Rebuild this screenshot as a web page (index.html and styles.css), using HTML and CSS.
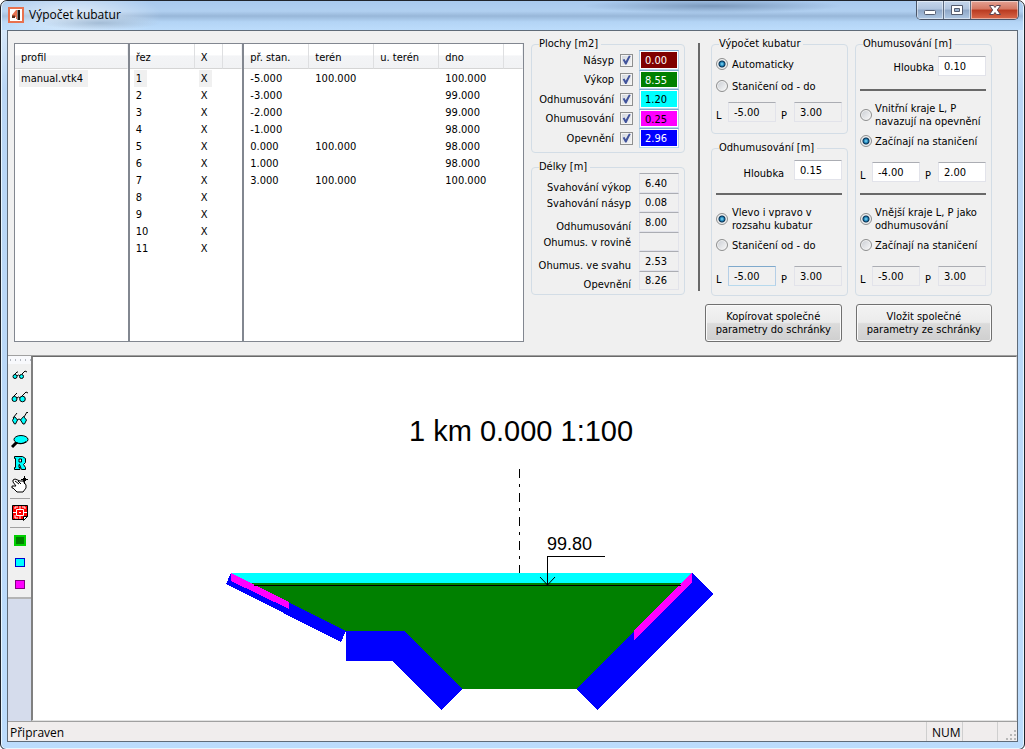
FILE: index.html
```html
<!DOCTYPE html>
<html lang="cs">
<head>
<meta charset="utf-8">
<title>Výpočet kubatur</title>
<link rel="stylesheet" href="styles.css">
</head>
<body>
<div class="window">
  <header class="titlebar">
    <svg class="app-icon" width="16" height="16" viewBox="0 0 16 16" aria-hidden="true">
      <rect x="1" y="1" width="14" height="14" fill="#fff" stroke="#e8714f" stroke-width="2"/>
      <path d="M8 3h1v9H8v-2H4V8z" fill="#e8714f"/><path d="M9.500 3H12v10H9.500z" fill="#1c1410"/><path d="M4 8.500h3V11H4z" fill="#5a2c1c"/>
    </svg>
    <h1 class="title">Výpočet kubatur</h1>
    <div class="caption">
      <button class="cap" type="button" aria-label="Minimalizovat"><svg width="14" height="12" viewBox="0 0 14 12"><rect x="1.500" y="6.500" width="11" height="4" rx="1" fill="#fff" stroke="#555d70"/></svg></button>
      <button class="cap" type="button" aria-label="Maximalizovat"><svg width="14" height="12" viewBox="0 0 14 12"><path d="M1.500 1.500h11v9h-11z" fill="#fff" stroke="#555d70"/><path d="M4.500 4.500h5v3h-5z" fill="#9db5d2" stroke="#555d70"/></svg></button>
      <button class="cap close" type="button" aria-label="Zavřít"><svg width="14" height="12" viewBox="0 0 14 12"><path d="M1.500 1.500h4L7 3.500l1.500-2h4L9.300 6l3.200 4.500h-4L7 8.500l-1.500 2h-4L4.700 6z" fill="#fff" stroke="#5b4450"/></svg></button>
    </div>
  </header>

  <div class="client">
    <main class="panel">
      <div class="lists">
        <div class="list">
          <table>
            <thead><tr><th>profil</th></tr></thead>
            <tbody><tr><td><span class="sel">manual.vtk4</span></td></tr></tbody>
          </table>
        </div>
        <div class="list">
          <table>
            <colgroup><col class="c65"><col class="c28"><col></colgroup>
            <thead><tr><th>řez</th><th>X</th><th></th></tr></thead>
            <tbody>
              <tr><td><span class="sel">1</span></td><td><span class="sel">X</span></td><td></td></tr>
              <tr><td>2</td><td>X</td><td></td></tr>
              <tr><td>3</td><td>X</td><td></td></tr>
              <tr><td>4</td><td>X</td><td></td></tr>
              <tr><td>5</td><td>X</td><td></td></tr>
              <tr><td>6</td><td>X</td><td></td></tr>
              <tr><td>7</td><td>X</td><td></td></tr>
              <tr><td>8</td><td>X</td><td></td></tr>
              <tr><td>9</td><td>X</td><td></td></tr>
              <tr><td>10</td><td>X</td><td></td></tr>
              <tr><td>11</td><td>X</td><td></td></tr>
            </tbody>
          </table>
        </div>
        <div class="list wide">
          <table>
            <colgroup><col class="c65"><col class="c65"><col class="c65"><col class="c65"><col></colgroup>
            <thead><tr><th>př. stan.</th><th>terén</th><th>u. terén</th><th>dno</th><th></th></tr></thead>
            <tbody>
              <tr><td>-5.000</td><td>100.000</td><td></td><td>100.000</td><td></td></tr>
              <tr><td>-3.000</td><td></td><td></td><td>99.000</td><td></td></tr>
              <tr><td>-2.000</td><td></td><td></td><td>99.000</td><td></td></tr>
              <tr><td>-1.000</td><td></td><td></td><td>98.000</td><td></td></tr>
              <tr><td>0.000</td><td>100.000</td><td></td><td>98.000</td><td></td></tr>
              <tr><td>1.000</td><td></td><td></td><td>98.000</td><td></td></tr>
              <tr><td>3.000</td><td>100.000</td><td></td><td>100.000</td><td></td></tr>
            </tbody>
          </table>
        </div>
      </div>

      <div class="results">
        <fieldset class="areas">
          <legend>Plochy [m2]</legend>
          <div class="area-grid">
            <label for="a1">Násyp</label><input type="checkbox" id="a1" checked><output class="field maroon">0.00</output>
            <label for="a2">Výkop</label><input type="checkbox" id="a2" checked><output class="field green">8.55</output>
            <label for="a3">Odhumusování</label><input type="checkbox" id="a3" checked><output class="field cyan">1.20</output>
            <label for="a4">Ohumusování</label><input type="checkbox" id="a4" checked><output class="field magenta">0.25</output>
            <label for="a5">Opevnění</label><input type="checkbox" id="a5" checked><output class="field blue">2.96</output>
          </div>
        </fieldset>
        <fieldset>
          <legend>Délky [m]</legend>
          <div class="length-grid">
            <label class="low" for="d1">Svahování výkop</label><input class="field" id="d1" readonly value="6.40">
            <label for="d2">Svahování násyp</label><input class="field" id="d2" readonly value="0.08">
            <label class="low" for="d3">Odhumusování</label><input class="field" id="d3" readonly value="8.00">
            <label for="d4">Ohumus. v rovině</label><input class="field" id="d4" readonly value="">
            <label class="low" for="d5">Ohumus. ve svahu</label><input class="field" id="d5" readonly value="2.53">
            <label class="low" for="d6">Opevnění</label><input class="field" id="d6" readonly value="8.26">
          </div>
        </fieldset>
      </div>

      <div class="divider"></div>

      <div class="settings">
        <div class="groups">
          <div class="group-col">
            <fieldset class="group calc">
              <legend>Výpočet kubatur</legend>
              <label class="choice"><input type="radio" name="calc" checked>Automaticky</label>
              <label class="choice"><input type="radio" name="calc">Staničení od - do</label>
              <div class="pair">
                <label for="cl">L</label><input class="field" id="cl" readonly value="-5.00"><label class="p" for="cp">P</label><input class="field" id="cp" readonly value="3.00">
              </div>
            </fieldset>
            <fieldset class="group">
              <legend>Odhumusování [m]</legend>
              <div class="depth"><label for="od">Hloubka</label><input class="field edit" id="od" value="0.15"></div>
              <hr>
              <label class="choice two"><input type="radio" name="odh" checked><span>Vlevo i vpravo v<br>rozsahu kubatur</span></label>
              <label class="choice"><input type="radio" name="odh">Staničení od - do</label>
              <div class="pair">
                <label for="ol">L</label><input class="field hot" id="ol" readonly value="-5.00"><label class="p" for="op">P</label><input class="field" id="op" readonly value="3.00">
              </div>
            </fieldset>
          </div>
          <div class="group-col">
            <fieldset class="group">
              <legend>Ohumusování [m]</legend>
              <div class="depth near"><label for="oh">Hloubka</label><input class="field edit" id="oh" value="0.10"></div>
              <hr>
              <label class="choice two"><input type="radio" name="inner"><span>Vnitřní kraje L, P<br>navazují na opevnění</span></label>
              <label class="choice"><input type="radio" name="inner" checked>Začínají na staničení</label>
              <div class="pair">
                <label for="il">L</label><input class="field edit" id="il" value="-4.00"><label class="p" for="ip">P</label><input class="field edit" id="ip" value="2.00">
              </div>
              <hr>
              <label class="choice two"><input type="radio" name="outer" checked><span>Vnější kraje L, P jako<br>odhumusování</span></label>
              <label class="choice"><input type="radio" name="outer">Začínají na staničení</label>
              <div class="pair">
                <label for="xl">L</label><input class="field" id="xl" readonly value="-5.00"><label class="p" for="xp">P</label><input class="field" id="xp" readonly value="3.00">
              </div>
            </fieldset>
          </div>
        </div>
        <div class="actions">
          <button class="push" type="button">Kopírovat společné<br>parametry do schránky</button>
          <button class="push" type="button">Vložit společné<br>parametry ze schránky</button>
        </div>
      </div>
    </main>

    <section class="work">
      <nav class="toolbar">
        <div class="tools">
          <span class="grip"></span>
          <button class="tool" type="button" aria-label="Malé měřítko"><svg width="18" height="18" viewBox="0 0 18 18" fill="none" stroke="#000"><path d="M3 9l3-3h1M11 8l3-3 2 1M6 10q1.500-2 3 0"/><circle cx="4" cy="10.500" r="2" fill="#0ff"/><circle cx="10.500" cy="10.500" r="2" fill="#0ff"/></svg></button>
          <button class="tool" type="button" aria-label="Střední měřítko"><svg width="18" height="18" viewBox="0 0 18 18" fill="none" stroke="#000"><path d="M2 9l4-4M11 8l4-4 2 1M6 10q1.500-2 3 0"/><circle cx="3.500" cy="11" r="2.500" fill="#0ff"/><circle cx="11.500" cy="11" r="2.800" fill="#0ff"/></svg></button>
          <button class="tool" type="button" aria-label="Velké měřítko"><svg width="18" height="18" viewBox="0 0 18 18" fill="none" stroke="#000"><path d="M2 8l4-5M13 7l3-5 1 1M6 10q2-2 4 0"/><path d="M3.500 6.500L6.500 10 4.500 14h-1l-2-3.500zM12.500 6.500l3 3.500-2 4h-1.500l-2.500-4z" fill="#0ff"/></svg></button>
          <button class="tool" type="button" aria-label="Lupa"><svg width="18" height="18" viewBox="0 0 18 18" fill="none" stroke="#000"><path d="M6 10l-5 5" stroke-width="3"/><ellipse cx="10" cy="7.500" rx="7" ry="4" fill="#0ff"/><path d="M5 10.500q5 3 10-1"/></svg></button>
          <button class="tool" type="button" aria-label="Překreslit"><svg width="18" height="18" viewBox="0 0 18 18"><path d="M3.500 2.500h8l3 2v4l-2 2 2 3v2h-4l-2-5H8v3h1v2H3.500v-2h1v-9h-1zM8 5v3h2.500V5z" fill="#0ff" stroke="#000"/></svg></button>
          <button class="tool" type="button" aria-label="Posun"><svg width="18" height="18" viewBox="0 0 18 18" fill="none" stroke="#000"><path d="M2 4l2-1 5 2h3l3 4v3l-3 4H6l-4-4H1v-2h4L2 6zM4 5l4 3M7 5l3 3" fill="#fff"/><path d="M13.500 0v8M10 3.500h7M12 2l3 3M15 2l-3 3"/></svg></button>
          <hr>
          <button class="tool tall" type="button" aria-label="Nastavení kresby"><svg width="18" height="18" viewBox="0 0 18 18"><path d="M1.500 1.500h15v11l-3 3h-12z" fill="#f00" stroke="#000"/><path d="M4 5V3h3M11 3h3v2M4 11v3h3M9 2v3M9 12v3M2 8.500h3M12 8.500h4M5.500 5.500h7v6h-7zM8 8.500h2" fill="none" stroke="#fff"/><path d="M12.500 16.500v-4h4z" fill="#fff" stroke="#000"/></svg></button>
          <hr>
          <button class="tool" type="button" aria-label="Výkop"><svg width="18" height="18" viewBox="0 0 18 18"><rect x="4" y="4" width="10" height="9" fill="#008000" stroke="#00d000" stroke-width="2"/></svg></button>
          <button class="tool" type="button" aria-label="Odhumusování"><svg width="18" height="18" viewBox="0 0 18 18"><rect x="4.500" y="4.500" width="9" height="8" fill="#0ff" stroke="#00c"/></svg></button>
          <button class="tool" type="button" aria-label="Ohumusování"><svg width="18" height="18" viewBox="0 0 18 18"><rect x="4.500" y="4.500" width="9" height="8" fill="#f0f" stroke="#800080"/></svg></button>
        </div>
      </nav>
      <div class="canvas">
        <svg class="drawing" viewBox="33 357 983 363" role="img" aria-label="Příčný řez">
          <g shape-rendering="crispEdges">
            <path fill="#008000" d="M231 583H688L577 689H461L405 632H346z"/>
            <path fill="#0ff" d="M231 573H692L682 583H250L231 583z"/>
            <path fill="#00f" d="M231 573L346 631L341 642L226 584z"/>
            <path fill="#f0f" d="M231 573L289 602V609L231 581z"/>
            <path fill="#00f" d="M346 631H405L462 689L441 710L393 661H346z"/>
            <path fill="#00f" d="M692 573L713 594L597 710L576 689z"/>
            <path fill="#f0f" d="M692 573V583L634 640V630z"/>
            <path fill="none" stroke="#000" d="M254 585.500H681M547.500 585V556.500H605"/>
            <path fill="none" stroke="#000" stroke-dasharray="9 6 3 6" d="M519.500 469V573"/>
          </g>
          <path fill="none" stroke="#000" d="M540 577l7.500 8 7.500-8"/>
          <text x="409" y="441" font-size="29">1 km 0.000 1:100</text>
          <text x="547" y="550" font-size="18">99.80</text>
        </svg>
      </div>
    </section>

    <footer class="status">
      <span class="message">Připraven</span>
      <span class="cell num">NUM</span>
      <span class="cell"></span>
      <span class="cell last"><svg width="12" height="12" viewBox="0 0 12 12" fill="#b8b8b8"><path d="M9 1h2v2H9zM9 5h2v2H9zM9 9h2v2H9zM5 5h2v2H5zM5 9h2v2H5zM1 9h2v2H1z"/></svg></span>
    </footer>
  </div>
</div>
</body>
</html>
```
FILE: styles.css
```css
* { box-sizing: border-box; }

body {
  margin: 0;
  background: #fff;
  color: #000;
  font: 11px/13px "DejaVu Sans Condensed", "DejaVu Sans", sans-serif;
}

button, input { font: inherit; color: inherit; margin: 0; }

.window {
  display: flex;
  flex-direction: column;
  min-height: 100vh;
  padding: 0 6px 7px;
  border: 1px solid #20242c;
  border-radius: 7px 7px 6px 6px;
  background: linear-gradient(#e4effa, #b9d6f5 12%, #bcdcfc);
  box-shadow: inset 0 0 0 1px #e8f6ff;
}

/* title bar */
.titlebar {
  display: flex;
  align-items: flex-start;
  height: 29px;
  margin: 0 -5px;
  padding: 0 4px 0 6px;
  background:
    radial-gradient(ellipse 60px 7px at 98px 22px, #8fa9c4aa, transparent),
    radial-gradient(ellipse 130px 7px at 710px 5px, #6f8db0cc, transparent),
    radial-gradient(ellipse 90px 26px at 70px 14px, #ffffff99, transparent),
    linear-gradient(#a9c9ee, #b0cff0 35%, #98b7d9 52%, #b3d4f5 72%, #bcdcfb);
  border-radius: 6px 6px 0 0;
}
.app-icon { margin-top: 6px; }
.title {
  flex: 1;
  margin: 5px 0 0 5px;
  font: 12px/18px "Open Sans", sans-serif;
}
.caption {
  display: flex;
  height: 19px;
  border: 1px solid #4a5568;
  border-top: 0;
  border-radius: 0 0 5px 5px;
  overflow: hidden;
}
.cap {
  display: flex;
  align-items: center;
  justify-content: center;
  width: 27px;
  padding: 0;
  border: 0;
  border-right: 1px solid #5d6b80;
  background: linear-gradient(#c6d7ec, #b0c4de 45%, #8ea6c6 50%, #afc8e4);
  box-shadow: inset 0 0 0 1px #ffffff77;
}
.cap.close {
  width: 47px;
  border: 0;
  background: linear-gradient(#e3a193, #d47762 45%, #b93a20 50%, #d9694b);
}

/* client area */
.client {
  display: flex;
  flex: 1;
  flex-direction: column;
  border: 1px solid #5f6b78;
  background: #f0f0f0;
}
.panel {
  display: flex;
  align-items: flex-start;
  padding: 7px 25px 13px 6px;
  border-bottom: 1px solid #a0a0a0;
}

/* lists */
.lists {
  display: flex;
  flex: 1;
  height: 299px;
  margin: 5px 7px 0 0;
}
.list {
  flex: 114 1 0;
  border: 1px solid #828790;
  background: #fff;
}
.list.wide { flex-grow: 282; }
.list table {
  width: 100%;
  border-spacing: 0;
  table-layout: fixed;
}
.c28 { width: 28px; }
.c65 { width: 65px; }
.list th {
  height: 25px;
  padding: 2px 0 0 6px;
  border-right: 1px solid #dedfe1;
  border-bottom: 1px solid #d5d5d5;
  background: linear-gradient(#fff 45%, #f3f4f6 50%, #f1f2f4);
  font-weight: normal;
  text-align: left;
}
.list th:last-child { border-right-color: #f1f2f4; }
.list tbody::before {
  content: "";
  display: block;
  height: 1px;
}
.list td {
  height: 17px;
  padding: 0 0 0 6px;
  white-space: nowrap;
}
.sel {
  display: inline-block;
  margin-left: -2px;
  padding: 2px 5px 2px 2px;
  background: #f0f0f0;
}

/* group boxes */
fieldset {
  min-width: 0;
  margin: 0;
  padding: 0 5px 4px;
  border: 1px solid #d3dde6;
  border-radius: 4px;
}
legend {
  margin-left: 2px;
  padding: 0 3px 0 0;
  line-height: 12px;
}
.results {
  display: flex;
  flex-direction: column;
  gap: 8px;
  width: 154px;
}
.area-grid, .length-grid {
  display: grid;
  align-items: center;
  justify-items: end;
  white-space: nowrap;
}
.area-grid {
  grid-template: 20px 19px 20px 19px 20px / 1fr 13px 40px;
  column-gap: 6px;
}
.length-grid {
  grid-template: 20px 19px 20px 19px 20px 19px / 1fr 40px;
  column-gap: 8px;
}
.length-grid label { padding-top: 1px; }
.length-grid .low { padding-top: 8px; }

.field {
  width: 100%;
  min-width: 0;
  height: 100%;
  padding: 0 5px;
  border: 1px solid #e2e3ea;
  border-top-color: #abadb3;
  background: #f0f0f0;
  outline: 0;
}
.edit { background: #fff; }
.hot, .area-grid .field { border-color: #7fa9cc #b5cfe7 #b7d9ed; }
.area-grid .field {
  padding-top: 3px;
  box-shadow: inset 0 0 0 1px #fff;
}
.area-grid .maroon { background: #800000; color: #fff; }
.area-grid .green { background: #008000; color: #fff; }
.area-grid .cyan { background: #00ffff; }
.area-grid .magenta { background: #ff00ff; }
.area-grid .blue { background: #0000ff; color: #fff; }

input[type="checkbox"] {
  appearance: none;
  width: 13px;
  height: 13px;
  border: 1px solid #8e8f8f;
  background: linear-gradient(135deg, #d0d5dc, #f6f6f6);
  box-shadow: inset 0 0 0 1px #f4f4f4;
}
input[type="checkbox"]:checked::before {
  content: "";
  display: block;
  width: 11px;
  height: 11px;
  background: #41539b;
  clip-path: polygon(15% 48%, 32% 42%, 43% 62%, 72% 10%, 88% 14%, 50% 92%, 38% 92%);
}
input[type="radio"] {
  appearance: none;
  flex: none;
  width: 12px;
  height: 12px;
  border: 1px solid #8e8f8f;
  border-radius: 50%;
  background: linear-gradient(135deg, #c8ccd2, #fafafa);
  box-shadow: inset 0 0 0 1px #f2f2f2;
}
input[type="radio"]:checked {
  background: radial-gradient(circle at 5px 5px, #8ce0fa 0, #1b7fb5 2px, #0b2f4e 3px, #dfe4e8 4px);
}

.divider {
  width: 2px;
  height: 248px;
  margin: 5px 5px 0 13px;
  background: #696969;
}
.settings { width: 287px; }
.groups {
  display: flex;
  gap: 7px;
  padding-left: 6px;
}
.group-col {
  display: flex;
  flex: 1 1 0;
  flex-direction: column;
  gap: 8px;
  min-width: 0;
}
.group { padding: 0 5px 9px 4px; }
.group legend { margin-left: 3px; }
.group hr {
  height: 2px;
  margin: 13px 0 11px;
  border: 0;
  background: #696969;
}
.group .pair + hr { margin-top: 11px; }
.choice {
  display: flex;
  align-items: center;
  gap: 4px;
  height: 16px;
  margin-top: 5px;
  white-space: nowrap;
}
.choice.two { height: 26px; margin-top: 0; }
.group-col:last-child .choice { gap: 3px; }
.calc .choice { margin-top: 6px; }
.pair {
  display: grid;
  grid-template: 20px / 12px 48px 1fr 48px;
  align-items: end;
  margin-top: 13px;
}
.p { padding-left: 5px; }
.calc .pair { margin-top: 8px; }
.calc { padding-bottom: 11px; }
.depth {
  display: grid;
  grid-template: 20px / 1fr 48px;
  gap: 10px;
  align-items: end;
  justify-items: end;
  margin-top: 6px;
}
.depth.near { gap: 4px; }
.depth.near label { padding-bottom: 2px; }
.actions {
  display: flex;
  gap: 14px;
  margin-top: 8px;
}
.push {
  flex: 1 1 0;
  height: 38px;
  padding: 0;
  border: 1px solid #707070;
  border-radius: 3px;
  background: linear-gradient(#f3f3f3, #ebebeb 48%, #dbdbdb 52%, #cfcfcf);
  box-shadow: inset 0 0 0 1px #fafafa;
  white-space: nowrap;
}

/* drawing area */
.work {
  display: flex;
  flex: 1;
  min-height: 0;
}
.toolbar {
  width: 23px;
  background: #d5dcec;
}
.tools {
  display: flex;
  flex-direction: column;
  align-items: center;
  padding-bottom: 1px;
  border-bottom: 2px solid #b4b4b4;
  background: #f0f0f0;
}
.grip {
  width: 100%;
  height: 8px;
  background: radial-gradient(circle, #b4b8c0 1px, transparent 1px) 0 0 / 5px 8px, #f8f9fc;
}
.tool {
  display: flex;
  align-items: center;
  justify-content: center;
  width: 22px;
  height: 22px;
  padding: 0;
  border: 0;
  background: none;
}
.tools hr {
  width: 20px;
  height: 1px;
  margin: 2px 0;
  border: 0;
  background: #a0a0a0;
}
.tool.tall { height: 24px; }
.canvas {
  flex: 1;
  min-width: 0;
  border: 1px solid #e3e3e3;
  border-top-color: #696969;
  border-left: 2px solid #808080;
  background: #fff;
}
.drawing {
  display: block;
  width: 100%;
  height: 100%;
  font-family: "Liberation Sans", Arial, sans-serif;
}

/* status bar */
.status {
  display: flex;
  height: 20px;
  border-top: 1px solid #a0a0a0;
  background: #f0eded;
  font: 12px/21px "Open Sans", sans-serif;
}
.message { flex: 1; padding-left: 2px; }
.cell { width: 35px; border-left: 1px solid #cfcfcf; }
.num { width: 36px; padding-left: 5px; }
.cell.last {
  display: flex;
  align-items: flex-end;
  justify-content: flex-end;
  width: 20px;
}
```
